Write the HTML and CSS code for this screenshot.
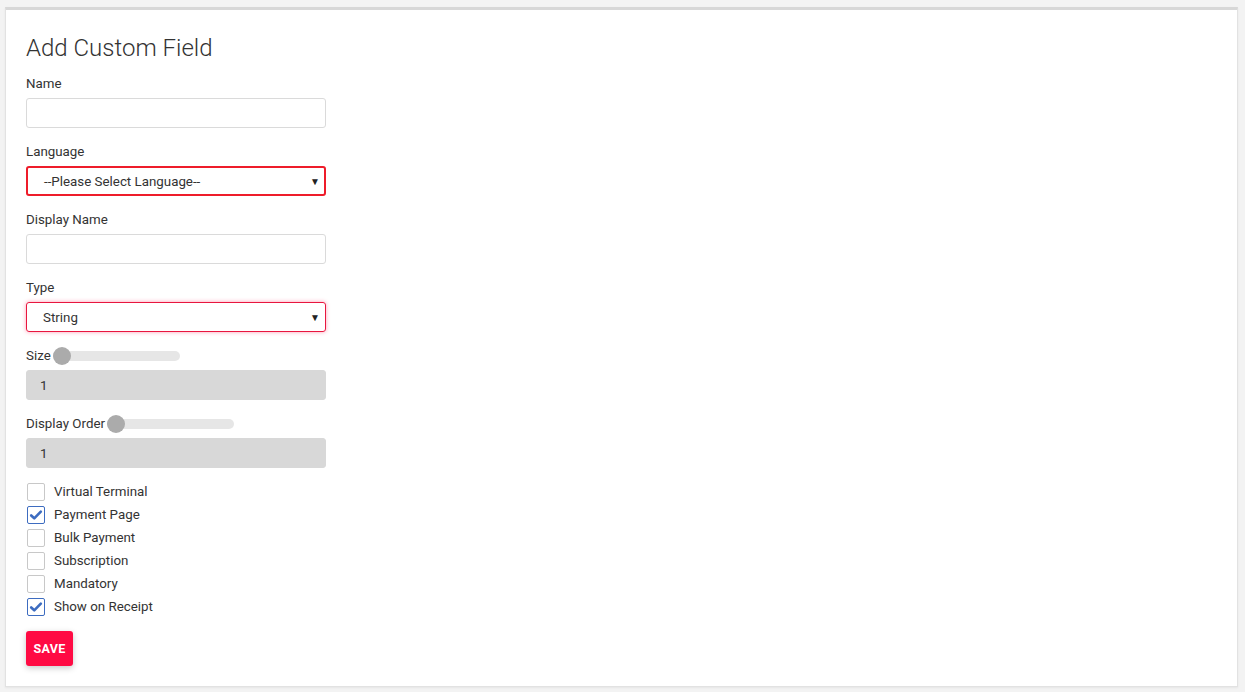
FILE: index.html
```html
<!DOCTYPE html>
<html lang="en">
<head>
<meta charset="utf-8">
<title>Add Custom Field</title>
<link rel="stylesheet" href="styles.css">
</head>
<body>
<div class="card">
  <h1 class="title">Add Custom Field</h1>
  <form class="form">
    <div class="group">
      <label class="label">Name</label>
      <input class="control" type="text">
    </div>
    <div class="group">
      <label class="label">Language</label>
      <div class="select select-error">
        <span>--Please Select Language--</span>
        <span class="caret">&#9660;</span>
      </div>
    </div>
    <div class="group">
      <label class="label">Display Name</label>
      <input class="control" type="text">
    </div>
    <div class="group">
      <label class="label">Type</label>
      <div class="select select-focus">
        <span>String</span>
        <span class="caret">&#9660;</span>
      </div>
    </div>
    <div class="group">
      <div class="slider-row">
        <label class="label">Size</label>
        <div class="track track-size"><div class="thumb"></div></div>
      </div>
      <div class="control readonly">1</div>
    </div>
    <div class="group">
      <div class="slider-row">
        <label class="label">Display Order</label>
        <div class="track track-order"><div class="thumb"></div></div>
      </div>
      <div class="control readonly">1</div>
    </div>
    <ul class="checks">
      <li class="check"><span class="box"></span>Virtual Terminal</li>
      <li class="check"><span class="box checked"><svg viewBox="0 0 16 16" width="14" height="14"><path d="M2.5 8.5 L6 11.8 L13.5 4.2" fill="none" stroke="#3d6cc0" stroke-width="3" stroke-linecap="round" stroke-linejoin="round"/></svg></span>Payment Page</li>
      <li class="check"><span class="box"></span>Bulk Payment</li>
      <li class="check"><span class="box"></span>Subscription</li>
      <li class="check"><span class="box"></span>Mandatory</li>
      <li class="check"><span class="box checked"><svg viewBox="0 0 16 16" width="14" height="14"><path d="M2.5 8.5 L6 11.8 L13.5 4.2" fill="none" stroke="#3d6cc0" stroke-width="3" stroke-linecap="round" stroke-linejoin="round"/></svg></span>Show on Receipt</li>
    </ul>
    <button class="btn" type="button">SAVE</button>
  </form>
</div>
</body>
</html>
```
FILE: styles.css
```css
html, body {
  margin: 0;
  padding: 0;
}
body {
  background: #f3f3f3;
  padding: 7px 7px 5px 5px;
  font-family: Roboto, "Liberation Sans", sans-serif;
  color: #333;
  box-sizing: border-box;
  height: 692px;
}
.card {
  background: #fff;
  border: 1px solid #e2e2e2;
  border-top: 3px solid #d7d7d7;
  height: 680px;
  box-sizing: border-box;
  padding: 0 20px;
  box-shadow: 0 1px 2px rgba(0,0,0,0.06);
}
.title {
  margin: 25px 0 14px;
  font-size: 24px;
  font-weight: 300;
  line-height: 26px;
  color: #333;
}
.form {
  display: flex;
  flex-direction: column;
  align-items: flex-start;
}
.group {
  display: flex;
  flex-direction: column;
  margin-bottom: 15px;
}
.label {
  font-size: 13.33px;
  line-height: 18px;
  margin-bottom: 5px;
  color: #333;
}
.control {
  width: 300px;
  height: 30px;
  box-sizing: border-box;
  border: 1px solid #dadada;
  border-radius: 3px;
  background: #fff;
  padding: 0 13px;
  font-family: inherit;
  font-size: 13.33px;
  outline: none;
  margin: 0;
}
.readonly {
  background: #d8d8d8;
  border-color: #d8d8d8;
  display: flex;
  align-items: center;
  color: #333;
}
.select {
  width: 300px;
  height: 30px;
  box-sizing: border-box;
  border-radius: 3px;
  display: flex;
  align-items: center;
  justify-content: space-between;
  font-size: 13.33px;
  color: #333;
}
.select-error {
  border: 2px solid #ee1c2a;
  padding: 0 4px 0 16px;
}
.select-focus {
  border: 1px solid #e8163f;
  box-shadow: 0 0 4px rgba(255, 40, 90, 0.45);
  padding: 0 5px 0 16px;
}
.caret {
  font-size: 10px;
  color: #222;
}
.slider-row {
  display: flex;
  align-items: center;
  height: 18px;
  margin-bottom: 5px;
}
.slider-row .label {
  margin-bottom: 0;
}
.track {
  height: 10px;
  border-radius: 5px;
  background: #e6e6e6;
  margin-left: 2px;
  position: relative;
  display: flex;
  align-items: center;
}
.track-size {
  width: 127px;
}
.track-order {
  width: 127px;
}
.thumb {
  width: 18px;
  height: 18px;
  border-radius: 50%;
  background: #ababab;
}
.checks {
  list-style: none;
  margin: -3px 0 13px;
  padding: 0;
}
.check {
  display: flex;
  align-items: center;
  height: 23px;
  font-size: 13.33px;
  color: #333;
}
.box {
  width: 18px;
  height: 18px;
  box-sizing: border-box;
  border: 1px solid #c8c8c8;
  border-radius: 2px;
  margin: 0 9px 0 1px;
  display: flex;
  align-items: center;
  justify-content: center;
  background: #fff;
}
.box.checked {
  border-color: #3d6cc0;
}
.btn {
  background: #ff0a43;
  color: #fff;
  border: none;
  border-radius: 3px;
  height: 35px;
  width: 47px;
  padding: 0;
  font-family: inherit;
  font-weight: 700;
  font-size: 12.5px;
  letter-spacing: 0.3px;
  box-shadow: 0 2px 6px rgba(0,0,0,0.22);
}
```
